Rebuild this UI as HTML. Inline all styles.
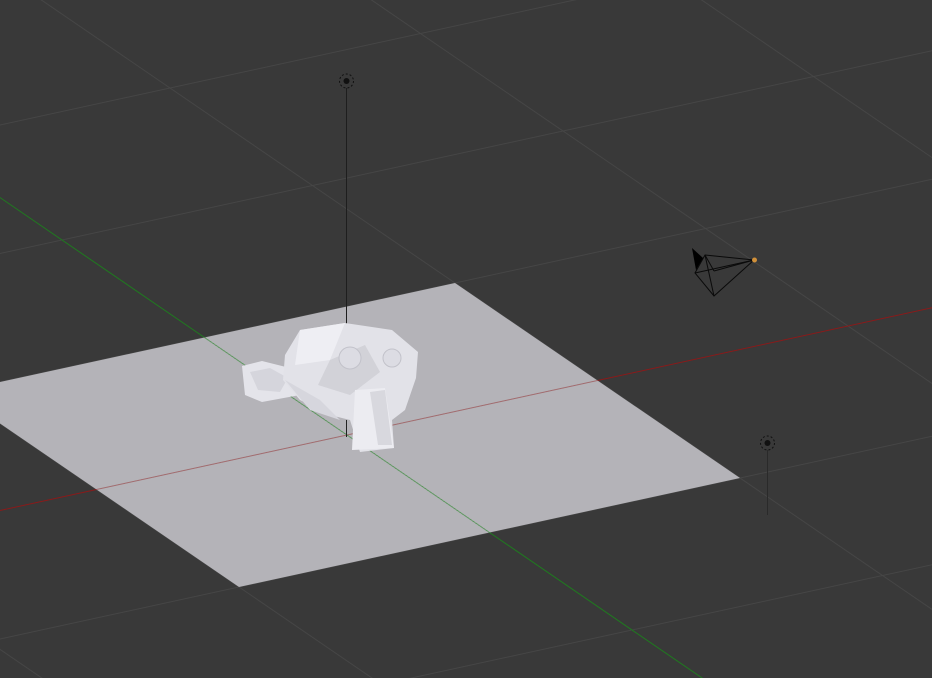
<!DOCTYPE html>
<html><head><meta charset="utf-8"><style>
html,body{margin:0;padding:0;background:#393939;width:932px;height:678px;overflow:hidden}
#w{position:absolute;left:0;top:0;width:932px;height:678px;overflow:hidden}
svg{display:block}
</style></head><body><div id="w">
<svg width="932" height="678" viewBox="0 0 932 678" xmlns="http://www.w3.org/2000/svg">
<rect width="932" height="678" fill="#393939"/>
<g transform="matrix(250.5 -54.5 142.5 97.5 347 435)" stroke="#464646" fill="none">
<line x1="-8" y1="-3" x2="8" y2="-3" vector-effect="non-scaling-stroke"/>
<line x1="-8" y1="-2" x2="8" y2="-2" vector-effect="non-scaling-stroke"/>
<line x1="-8" y1="-1" x2="8" y2="-1" vector-effect="non-scaling-stroke"/>
<line x1="-8" y1="1" x2="8" y2="1" vector-effect="non-scaling-stroke"/>
<line x1="-8" y1="2" x2="8" y2="2" vector-effect="non-scaling-stroke"/>
<line x1="-8" y1="3" x2="8" y2="3" vector-effect="non-scaling-stroke"/>
<line x1="-8" y1="-4" x2="8" y2="-4" vector-effect="non-scaling-stroke"/>
<line y1="-8" x1="-3" y2="8" x2="-3" vector-effect="non-scaling-stroke"/>
<line y1="-8" x1="-2" y2="8" x2="-2" vector-effect="non-scaling-stroke"/>
<line y1="-8" x1="-1" y2="8" x2="-1" vector-effect="non-scaling-stroke"/>
<line y1="-8" x1="1" y2="8" x2="1" vector-effect="non-scaling-stroke"/>
<line y1="-8" x1="2" y2="8" x2="2" vector-effect="non-scaling-stroke"/>
<line y1="-8" x1="3" y2="8" x2="3" vector-effect="non-scaling-stroke"/>
<line y1="-8" x1="4" y2="8" x2="4" vector-effect="non-scaling-stroke"/>
<line x1="-8" y1="0" x2="-1" y2="0" stroke="#8a1a1a" vector-effect="non-scaling-stroke"/>
<line x1="1" y1="0" x2="8" y2="0" stroke="#8a1a1a" vector-effect="non-scaling-stroke"/>
<line y1="-8" x1="0" y2="-1" x2="0" stroke="#1f7a1f" vector-effect="non-scaling-stroke"/>
<line y1="1" x1="0" y2="8" x2="0" stroke="#1f7a1f" vector-effect="non-scaling-stroke"/>
<polygon points="-1,-1 1,-1 1,1 -1,1" fill="#b4b3b8" stroke="none"/>
<line x1="-1" y1="0" x2="1" y2="0" stroke="#8a1010" stroke-dasharray="0.012 0.008" vector-effect="non-scaling-stroke"/>
<line y1="-1" x1="0" y2="1" x2="0" stroke="#1a801a" stroke-dasharray="0.012 0.008" vector-effect="non-scaling-stroke"/>
</g>
<line x1="346.5" y1="88" x2="346.5" y2="326" stroke="#1e1e1e" stroke-width="1"/>
<circle cx="346.5" cy="81" r="7" fill="none" stroke="#111" stroke-dasharray="2 2"/>
<circle cx="346.5" cy="81" r="3" fill="#111"/>
<line x1="346.5" y1="420" x2="346.5" y2="437" stroke="#222"/>
<line x1="767.5" y1="450" x2="767.5" y2="515" stroke="#2a2a2a"/>
<circle cx="767.5" cy="443" r="7" fill="none" stroke="#111" stroke-dasharray="2 2"/>
<circle cx="767.5" cy="443" r="3" fill="#111"/>
<g stroke="#0a0a0a" fill="none" stroke-width="1">
<polygon points="705,255 754,260 714,296 695,273"/>
<line x1="705" y1="255" x2="714" y2="296"/>
<line x1="695" y1="273" x2="754" y2="260"/>
<line x1="705" y1="255" x2="714" y2="271"/>
<line x1="714" y1="271" x2="754" y2="260"/>
</g>
<polygon points="692,248 703,258 696,270" fill="#000"/>
<circle cx="754.5" cy="260" r="2.5" fill="#d0903a"/>
<g>
<path d="M242,366 L262,361 L290,368 L300,395 L262,402 L245,395 Z" fill="#e4e4ea"/>
<path d="M250,372 L270,368 L288,378 L280,392 L258,390 Z" fill="#d5d5dc"/>
<path d="M300,330 L345,323 L392,330 L418,352 L416,378 L405,410 L392,420 L394,448 L360,452 L350,420 L330,415 L300,400 L283,380 L285,355 Z" fill="#e2e2e8"/>
<path d="M300,330 L345,323 L330,360 L295,365 Z" fill="#eeeef3"/>
<path d="M330,360 L365,345 L380,372 L350,395 L318,385 Z" fill="#d2d2d8"/>
<circle cx="350" cy="358" r="11" fill="#dcdce3" stroke="#c2c2ca"/>
<circle cx="392" cy="358" r="9" fill="#dcdce3" stroke="#c2c2ca"/>
<path d="M355,390 L385,388 L394,448 L352,450 Z" fill="#ececf1"/>
<path d="M370,392 L385,390 L392,445 L378,445 Z" fill="#d8d8de"/>
<path d="M285,380 L320,400 L340,420 L310,410 Z" fill="#d6d6dd"/>
</g>
</svg>
</div></body></html>
